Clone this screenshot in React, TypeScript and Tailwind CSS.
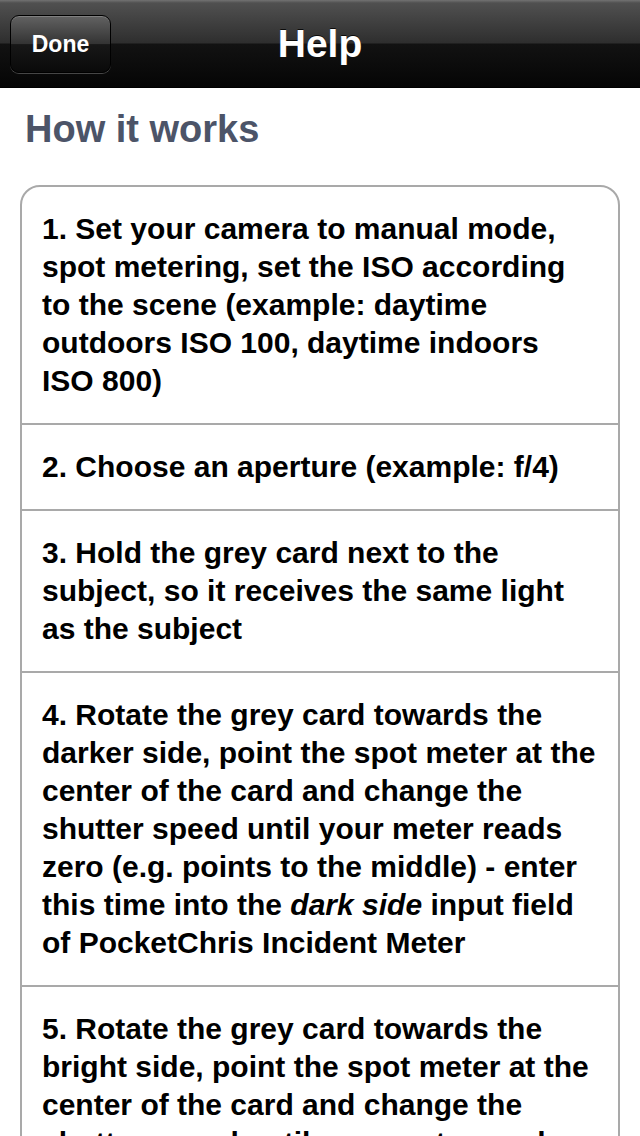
import type { ReactNode } from 'react';

type Step = { lines: ReactNode[] };

const steps: Step[] = [
  {
    lines: [
      '1. Set your camera to manual mode,',
      'spot metering, set the ISO according',
      'to the scene (example: daytime',
      'outdoors ISO 100, daytime indoors',
      'ISO 800)',
    ],
  },
  { lines: ['2. Choose an aperture (example: f/4)'] },
  {
    lines: [
      '3. Hold the grey card next to the',
      'subject, so it receives the same light',
      'as the subject',
    ],
  },
  {
    lines: [
      '4. Rotate the grey card towards the',
      'darker side, point the spot meter at the',
      'center of the card and change the',
      'shutter speed until your meter reads',
      'zero (e.g. points to the middle) - enter',
      <>
        this time into the <i>dark side</i> input field
      </>,
      'of PocketChris Incident Meter',
    ],
  },
  {
    lines: [
      '5. Rotate the grey card towards the',
      'bright side, point the spot meter at the',
      'center of the card and change the',
      'shutter speed until your meter reads',
      'zero (e.g. points to the middle) - enter',
      <>
        this time into the <i>bright side</i> input field
      </>,
      'of PocketChris Incident Meter',
    ],
  },
];

const NavBar = () => (
  <div className="relative flex h-[88px] items-center justify-center border-b border-black bg-[linear-gradient(to_bottom,#727272_0px,#505050_3px,#2e2e2e_43px,#121212_44px,#050505_88px)]">
    <button className="absolute left-[10px] top-[15px] flex h-[58px] w-[101px] items-center justify-center rounded-[9px] border border-black bg-[linear-gradient(to_bottom,#626262_0%,#333333_50%,#171717_51%,#0a0a0a_100%)] shadow-[0_1px_0_rgba(255,255,255,0.25),inset_0_1px_0_rgba(255,255,255,0.2)]">
      <span className="text-[23px] font-bold text-white">Done</span>
    </button>
    <h1 className="text-[39px] font-bold leading-none text-white [text-shadow:0_-1px_0_rgba(0,0,0,0.8)]">Help</h1>
  </div>
);

export default function App() {
  return (
    <div
      className="min-h-screen overflow-hidden bg-white"
      style={{ fontFamily: '"Liberation Sans", Arial, Helvetica, sans-serif' }}
    >
      <NavBar />
      <div className="px-5">
        <h2 className="mt-[19px] pl-[5px] text-[38px] font-bold leading-[44px] text-[#4c5468]">How it works</h2>
        <div className="mt-[34px] overflow-hidden rounded-[20px] border-2 border-[#a9a9a9] bg-white">
          {steps.map((step, i) => (
            <div
              key={i}
              className={`px-5 py-[23px] text-[30px] font-bold leading-[38px] text-black ${
                i > 0 ? 'border-t-2 border-[#a9a9a9]' : ''
              }`}
            >
              {step.lines.map((line, j) => (
                <div key={j} className="whitespace-nowrap">
                  {line}
                </div>
              ))}
            </div>
          ))}
        </div>
      </div>
    </div>
  );
}
